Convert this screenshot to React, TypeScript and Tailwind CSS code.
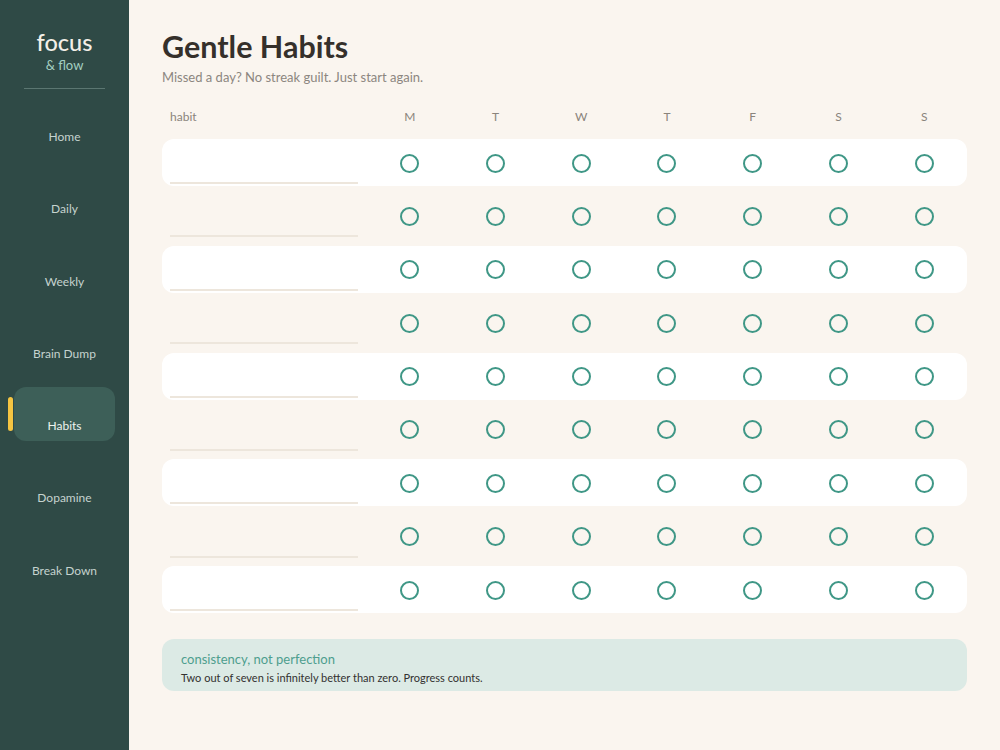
import React from "react";

const nav = ["Home", "Daily", "Weekly", "Brain Dump", "Habits", "Dopamine", "Break Down"];
const days = ["M", "T", "W", "T", "F", "S", "S"];

export default function App() {
  return (
    <div
      className="flex w-[1000px] h-[750px] bg-[#faf5ef] overflow-hidden"
      style={{ fontFamily: "Lato, 'Noto Sans', sans-serif" }}
    >
      <aside className="w-[129px] shrink-0 bg-[#2f4a46] flex flex-col items-center">
        <div className="mt-[28px] text-[23.5px] leading-[28px] font-medium text-[#f3efe8]">focus</div>
        <div className="text-[13px] leading-[18px] text-[#a3cfc1]">&amp; flow</div>
        <div className="mt-[14px] w-[81px] h-px bg-[#5b7671]" />
        <nav className="mt-[20px] flex flex-col gap-[18.3px] w-full">
          {nav.map((n) => {
            const active = n === "Habits";
            return (
              <div key={n} className="relative h-[54px]">
                {active && (
                  <>
                    <div className="absolute left-[14px] top-[-11px] w-[101px] h-[54px] rounded-[12px] bg-[#3d5f58]" />
                    <div className="absolute left-[8px] top-[-1px] w-[5px] h-[34px] rounded-full bg-[#f5c542]" />
                  </>
                )}
                <div
                  className={`relative ml-[14px] w-[101px] h-[54px] flex items-center justify-center pt-[2px] text-[12px] ${
                    active ? "text-[#eef2ee]" : "text-[#c5d3cf]"
                  }`}
                >
                  {n}
                </div>
              </div>
            );
          })}
        </nav>
      </aside>
      <main className="flex-1 pl-[33px] pr-[33px] pt-[28px]">
        <h1 className="text-[30.5px] leading-[36px] font-bold text-[#35302b]">Gentle Habits</h1>
        <p className="mt-[4px] text-[13px] leading-[18px] text-[#8c8680]">
          Missed a day? No streak guilt. Just start again.
        </p>
        <div className="mt-[17px] grid grid-cols-[205px_repeat(7,1fr)] h-[28px] items-center text-[12px] text-[#8a847c]">
          <div className="pl-[8px]">habit</div>
          {days.map((d, i) => (
            <div key={i} className="text-center">
              {d}
            </div>
          ))}
        </div>
        <div className="mt-[8px] flex flex-col gap-[6.4px]">
          {Array.from({ length: 9 }).map((_, r) => (
            <div
              key={r}
              className={`grid grid-cols-[205px_repeat(7,1fr)] h-[47px] rounded-[12px] ${
                r % 2 === 0 ? "bg-white" : ""
              }`}
            >
              <div className="pl-[8px] flex items-end pb-[2px]">
                <div className="w-[188px] h-[34px] border-b-2 border-[#ede6dc]" />
              </div>
              {days.map((_, i) => (
                <div key={i} className="flex items-center justify-center pt-[1px]">
                  <div className="w-[19px] h-[19px] rounded-full border-2 border-[#3f9786]" />
                </div>
              ))}
            </div>
          ))}
        </div>
        <div className="mt-[26px] h-[52px] rounded-[12px] bg-[#dceae5] pl-[19px] pt-[12px]">
          <div className="text-[13px] leading-[17px] text-[#4e9e8e]">consistency, not perfection</div>
          <div className="mt-[2px] text-[11px] leading-[15px] text-[#333130]">
            Two out of seven is infinitely better than zero. Progress counts.
          </div>
        </div>
      </main>
    </div>
  );
}
